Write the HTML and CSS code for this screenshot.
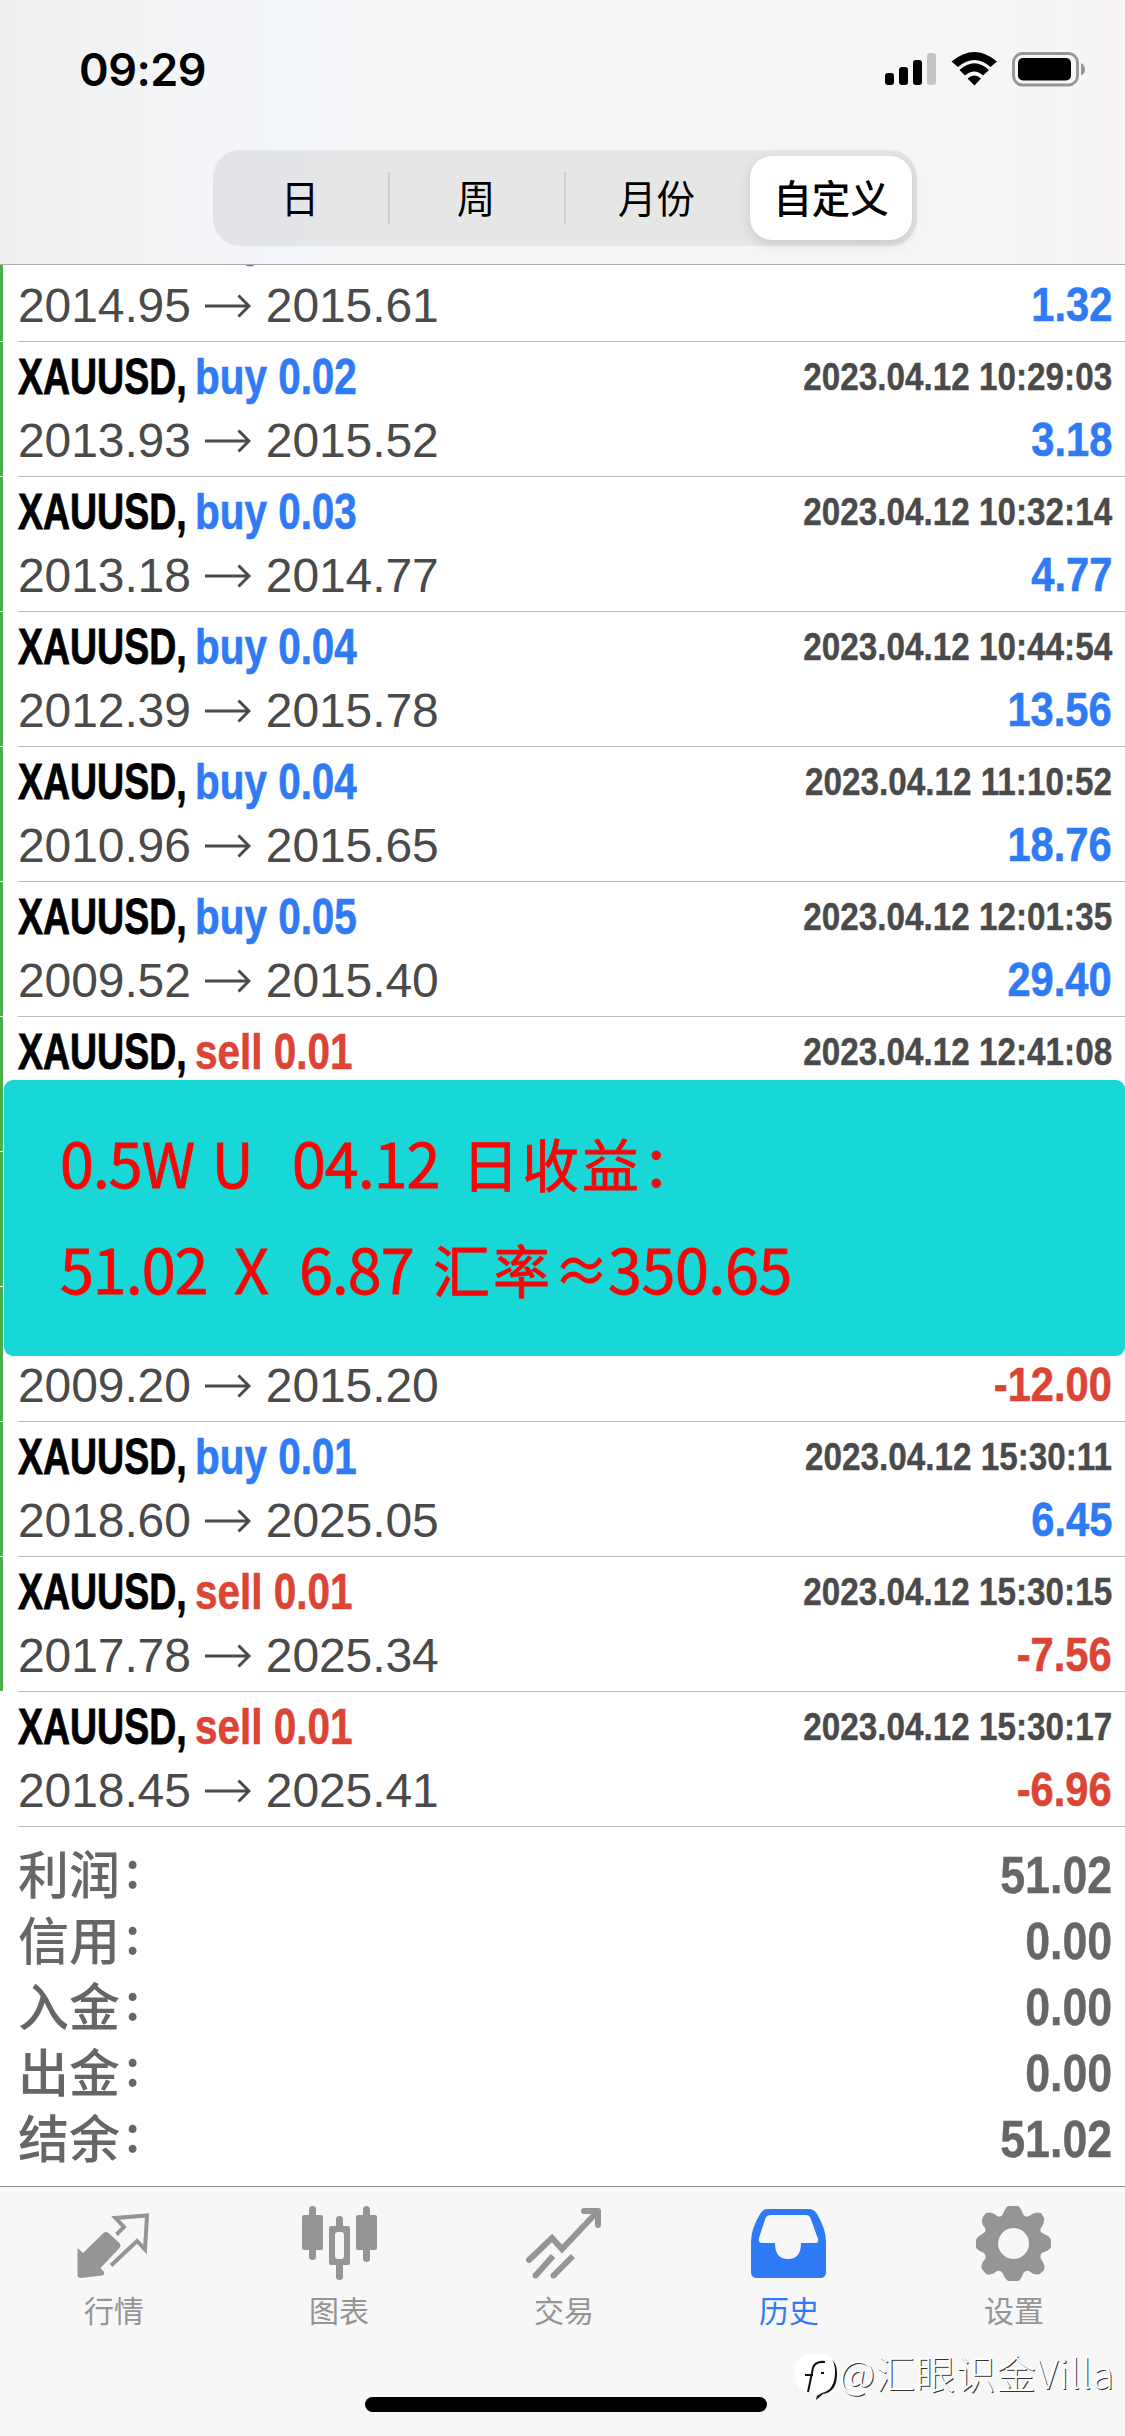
FILE: index.html
```html
<!DOCTYPE html>
<html lang="zh-CN">
<head>
<meta charset="utf-8">
<title>历史</title>
<link rel="stylesheet" href="styles.css">
</head>
<body>
<div class="screen">
  <header class="top">
    <div class="status">
      <span class="clock">09:29</span>
      <svg class="status-icons" width="202" height="40" viewBox="0 0 202 40">
        <rect x="2" y="23" width="9" height="12" rx="3"/>
        <rect x="16" y="17" width="9" height="18" rx="3"/>
        <rect x="30" y="10" width="9" height="25" rx="3"/>
        <rect x="44" y="3" width="9" height="32" rx="3" fill="#c4c4c4"/>
        <path d="M68.500 11.500Q91.500 -7.500 114 11.500L107.500 17Q91.500 3 75 17Z"/>
        <path d="M76.500 20Q91.500 6.500 106 20L100 25.500Q91.500 17.500 82 25.500Z"/>
        <path d="M84.500 28.500Q91.500 22.500 98 28.500L91.500 35.500Z"/>
        <rect x="130.500" y="3.500" width="64" height="31.500" rx="9" fill="none" stroke="#969696" stroke-width="2.800"/>
        <rect x="135" y="8" width="53" height="22.500" rx="5"/>
        <path d="M198 13Q202 15 202 19.500T198 25.500Z" fill="#969696"/>
      </svg>
    </div>
    <nav class="segments">
      <span class="segment">日</span>
      <span class="segment divided">周</span>
      <span class="segment divided">月份</span>
      <span class="segment selected">自定义</span>
    </nav>
  </header>

  <main class="history">
    <section class="deal clipped">
      <div class="line"><span class="title"><b class="symbol">XAUUSD,</b><b class="side buy">buy 0.02</b></span></div>
      <div class="line"><span class="prices">2014.95<svg class="arrow" viewBox="0 0 46 24"><path d="M0 12H43M33.500 1.500L44 12L33.500 22.500"/></svg>2015.61</span><b class="result buy">1.32</b></div>
    </section>
    <section class="deal">
      <div class="line"><span class="title"><b class="symbol">XAUUSD,</b><b class="side buy">buy 0.02</b></span><b class="time">2023.04.12 10:29:03</b></div>
      <div class="line"><span class="prices">2013.93<svg class="arrow" viewBox="0 0 46 24"><path d="M0 12H43M33.500 1.500L44 12L33.500 22.500"/></svg>2015.52</span><b class="result buy">3.18</b></div>
    </section>
    <section class="deal">
      <div class="line"><span class="title"><b class="symbol">XAUUSD,</b><b class="side buy">buy 0.03</b></span><b class="time">2023.04.12 10:32:14</b></div>
      <div class="line"><span class="prices">2013.18<svg class="arrow" viewBox="0 0 46 24"><path d="M0 12H43M33.500 1.500L44 12L33.500 22.500"/></svg>2014.77</span><b class="result buy">4.77</b></div>
    </section>
    <section class="deal">
      <div class="line"><span class="title"><b class="symbol">XAUUSD,</b><b class="side buy">buy 0.04</b></span><b class="time">2023.04.12 10:44:54</b></div>
      <div class="line"><span class="prices">2012.39<svg class="arrow" viewBox="0 0 46 24"><path d="M0 12H43M33.500 1.500L44 12L33.500 22.500"/></svg>2015.78</span><b class="result buy">13.56</b></div>
    </section>
    <section class="deal">
      <div class="line"><span class="title"><b class="symbol">XAUUSD,</b><b class="side buy">buy 0.04</b></span><b class="time">2023.04.12 11:10:52</b></div>
      <div class="line"><span class="prices">2010.96<svg class="arrow" viewBox="0 0 46 24"><path d="M0 12H43M33.500 1.500L44 12L33.500 22.500"/></svg>2015.65</span><b class="result buy">18.76</b></div>
    </section>
    <section class="deal">
      <div class="line"><span class="title"><b class="symbol">XAUUSD,</b><b class="side buy">buy 0.05</b></span><b class="time">2023.04.12 12:01:35</b></div>
      <div class="line"><span class="prices">2009.52<svg class="arrow" viewBox="0 0 46 24"><path d="M0 12H43M33.500 1.500L44 12L33.500 22.500"/></svg>2015.40</span><b class="result buy">29.40</b></div>
    </section>
    <section class="deal">
      <div class="line"><span class="title"><b class="symbol">XAUUSD,</b><b class="side sell">sell 0.01</b></span><b class="time">2023.04.12 12:41:08</b></div>
    </section>
    <section class="deal"></section>
    <section class="deal">
      <div class="line"></div>
      <div class="line"><span class="prices">2009.20<svg class="arrow" viewBox="0 0 46 24"><path d="M0 12H43M33.500 1.500L44 12L33.500 22.500"/></svg>2015.20</span><b class="result sell">-12.00</b></div>
    </section>
    <section class="deal">
      <div class="line"><span class="title"><b class="symbol">XAUUSD,</b><b class="side buy">buy 0.01</b></span><b class="time">2023.04.12 15:30:11</b></div>
      <div class="line"><span class="prices">2018.60<svg class="arrow" viewBox="0 0 46 24"><path d="M0 12H43M33.500 1.500L44 12L33.500 22.500"/></svg>2025.05</span><b class="result buy">6.45</b></div>
    </section>
    <section class="deal">
      <div class="line"><span class="title"><b class="symbol">XAUUSD,</b><b class="side sell">sell 0.01</b></span><b class="time">2023.04.12 15:30:15</b></div>
      <div class="line"><span class="prices">2017.78<svg class="arrow" viewBox="0 0 46 24"><path d="M0 12H43M33.500 1.500L44 12L33.500 22.500"/></svg>2025.34</span><b class="result sell">-7.56</b></div>
    </section>
    <section class="deal unmarked">
      <div class="line"><span class="title"><b class="symbol">XAUUSD,</b><b class="side sell">sell 0.01</b></span><b class="time">2023.04.12 15:30:17</b></div>
      <div class="line"><span class="prices">2018.45<svg class="arrow" viewBox="0 0 46 24"><path d="M0 12H43M33.500 1.500L44 12L33.500 22.500"/></svg>2025.41</span><b class="result sell">-6.96</b></div>
    </section>
    <aside class="note">
      <p class="note-line"><span class="n1">0.5W</span><span class="n2">U</span><span class="n3">04.12</span><span class="han">日收益：</span></p>
      <p class="note-line"><span class="n4">51.02</span><span class="n5">X</span><span class="n6">6.87</span><span class="han han-rate">汇率</span><span class="n7">≈</span><span class="n8">350.65</span></p>
    </aside>
  </main>

  <section class="summary">
    <div class="total"><span class="label">利润<i>:</i></span><b class="sum">51.02</b></div>
    <div class="total"><span class="label">信用<i>:</i></span><b class="sum">0.00</b></div>
    <div class="total"><span class="label">入金<i>:</i></span><b class="sum">0.00</b></div>
    <div class="total"><span class="label">出金<i>:</i></span><b class="sum">0.00</b></div>
    <div class="total"><span class="label">结余<i>:</i></span><b class="sum">51.02</b></div>
  </section>

  <footer class="tabs">
    <div class="tab">
      <svg width="80" height="80" viewBox="0 0 80 80"><path fill="currentColor" d="M3.500 39L9 44L29.500 24Q32 22 34.500 24L45.500 34Q47.500 37 45 39.500L26.500 59L30 63Q31 66 28 66.500L7 69Q3.500 69 3.500 66Z"/><path fill="none" stroke="currentColor" stroke-width="4" d="M42.500 25.500L50 18L41.500 9L73 6.500L71 40.500L63 32L37 56.500"/></svg>
      <span>行情</span>
    </div>
    <div class="tab">
      <svg width="80" height="86" viewBox="0 0 80 86"><g fill="currentColor"><rect x="10" y="0" width="7" height="54" rx="3.500"/><rect x="3" y="9" width="21" height="35" rx="2"/><rect x="64" y="0" width="7" height="56" rx="3.500"/><rect x="57" y="9" width="21" height="35" rx="2"/><rect x="37" y="10" width="7" height="64" rx="3.500"/><rect x="30" y="20" width="21" height="39" rx="2"/></g><rect x="36" y="26" width="9" height="27" rx="3" fill="#f7f7f7"/></svg>
      <span>图表</span>
    </div>
    <div class="tab">
      <svg width="80" height="86" viewBox="0 0 80 86" fill="none" stroke="currentColor" stroke-width="6"><path stroke-linecap="round" d="M5 54L28 32L38 43L73 6"/><path stroke-linecap="round" stroke-linejoin="round" d="M60 5H74V19"/><path d="M29 50L12 69M49 50L30 69"/><g fill="currentColor" stroke="none"><circle cx="11.500" cy="69.500" r="3"/><circle cx="29.500" cy="69.500" r="3"/></g></svg>
      <span>交易</span>
    </div>
    <div class="tab active">
      <svg width="80" height="86" viewBox="0 0 80 86"><path fill="currentColor" fill-rule="evenodd" d="M18 3H60Q65 3 68 8Q77 23 77 36V66Q77 72 71 72H8Q2 72 2 66V36Q2 23 11 8Q14 3 18 3ZM22 9Q18 9 16.500 12L10 32Q9 37 13 37H26Q26 53 39 53T52 37H66Q70 37 69 33L61.500 12Q60 9 57 9Z"/></svg>
      <span>历史</span>
    </div>
    <div class="tab">
      <svg width="80" height="86" viewBox="0 0 80 86"><path fill="currentColor" fill-rule="evenodd" d="M34 0H44Q47 2 49 8Q51 12 55 10Q61 5 67 7L70 12Q71 17 67 22Q65 26 70 28Q76 30 77 34V41Q75 45 70 46Q65 48 67 53Q72 60 70 64L66 68Q61 70 55 65Q51 64 49 68Q47 74 44 75H34Q31 73 29 68Q27 64 23 65Q17 70 12 68L8 63Q6 59 11 53Q13 48 8 46Q3 44 2 41V34Q4 30 8 28Q13 26 11 22Q6 17 9 11L12 7Q18 5 23 10Q27 12 29 8Q31 2 34 0ZM39.500 22A15.500 15.500 0 1 0 39.600 22Z"/></svg>
      <span>设置</span>
    </div>
    <div class="home-bar"></div>
    <div class="watermark">
      <svg width="44" height="46" viewBox="0 0 44 46"><path fill="#111" d="M18 3H28Q42 3 42 20Q42 38 28 40L21 46L23 37Z"/><path fill="#fff" d="M14 0H26Q40 0 40 18Q40 36 27 39L20 43L18 38H12Q0 35 0 19Q0 2 14 0Z"/><path fill="none" stroke="#111" stroke-width="2" d="M13 38L18 14Q20 7 30 8M10 21H18M26 19H29"/></svg>
      <span class="handle">@汇眼识金Villa</span>
    </div>
  </footer>
</div>
</body>
</html>
```
FILE: styles.css
```css
* { box-sizing: border-box; }
body { margin: 0; background: #fff; font-family: "Liberation Sans", "Noto Sans CJK SC", sans-serif; }
.screen { width: 1125px; height: 2436px; overflow: hidden; display: flex; flex-direction: column; background: #fff; }

.top { height: 265px; flex: none; border-bottom: 1px solid #aaa; background: linear-gradient(90deg, #efefef 0, #f3f4f5 150px, #f3f6fc 270px, #f6f6f6 400px, #f6f6f6 1000px, #f8f5f4 100%); }
.status { height: 150px; padding: 19px 40px 0 79px; display: flex; justify-content: space-between; align-items: flex-start; }
.clock { font: 600 45px/101px Inter, sans-serif; letter-spacing: -.5px; }
.status-icons { margin-top: 31px; }
.segments { width: 704px; height: 96px; margin-left: 213px; padding: 6px 5px 6px 0; display: grid; grid-template-columns: 176px 176px 185px 162px; border-radius: 27px; background: linear-gradient(90deg, #e2e4e7, #e7e7e8 40%, #e5e5e5); }
.segment { position: relative; padding-right: 2px; font: 400 38.500px/80px "Noto Sans CJK SC", sans-serif; text-align: center; }
.divided::before { content: ""; position: absolute; left: -1px; top: 16px; width: 2px; height: 52px; background: #cfcfd1; }
.selected { padding-right: 0; background: #fff; border-radius: 22px; font-weight: 500; box-shadow: 0 4px 12px rgba(0,0,0,.13); }

.history { position: relative; flex: none; }
.deal { position: relative; height: 135px; padding: 2px 13px 0 18px; }
.deal::before { content: ""; position: absolute; left: 0; top: 0; width: 3px; bottom: 1px; background: #4cad4c; }
.deal::after { content: ""; position: absolute; left: 18px; right: 0; bottom: 0; height: 1px; background: #bcbcbf; }
.unmarked::before { display: none; }
.clipped { height: 77px; overflow: hidden; display: flex; flex-direction: column; justify-content: flex-end; padding-bottom: 7px; }
.clipped .title { line-height: 60px; }
.line { height: 63px; flex: none; display: flex; justify-content: space-between; line-height: 68px; white-space: nowrap; }
.title { display: flex; font-size: 49.500px; line-height: 66px; }
.symbol { width: 177px; color: #000; transform: scaleX(.757); transform-origin: 0 0; -webkit-text-stroke: .8px currentColor; }
.side { transform: scaleX(.817); transform-origin: 0 0; -webkit-text-stroke: .6px currentColor; }
.buy { color: #2f7af5; }
.sell { color: #dc4436; }
.time { font-size: 39px; line-height: 65px; color: #4a4a4a; transform: scaleX(.853); transform-origin: 100% 0; -webkit-text-stroke: .4px currentColor; }
.prices { font-size: 48px; line-height: 67px; color: #4a4a4a; display: flex; align-items: center; height: 67px; letter-spacing: -.1px; }
.arrow { width: 46px; height: 24px; margin: 0 15px 0 14px; fill: none; stroke: #4a4a4a; stroke-width: 3; }
.result { font-size: 49px; line-height: 65px; transform: scaleX(.85); transform-origin: 100% 0; -webkit-text-stroke: .6px currentColor; }

.note { position: absolute; left: 4px; top: 815px; width: 1121px; height: 276px; padding: 29px 0 0 56px; border-radius: 9px; background: #17d7d7; color: #fa0505; font: 400 61px/106px "Noto Sans CJK SC", sans-serif; -webkit-text-stroke: .8px currentColor; }
.note-line { margin: 0; height: 106px; display: flex; white-space: nowrap; letter-spacing: -1px; }
.n1 { width: 152px; letter-spacing: -1px; }
.n2 { width: 80px; transform: scaleX(.94); transform-origin: 0 0; }
.n3 { width: 170px; }
.n4 { width: 174px; }
.n5 { width: 65px; }
.n6 { width: 134px; }
.n7 { width: 54px; transform: scaleX(.9); transform-origin: 0 0; }
.n8 { letter-spacing: -.4px; }
.han { font-size: 57px; letter-spacing: 3px; }
.han-rate { width: 121px; }

.summary { height: 359px; flex: none; padding: 15px 13px 0 18px; }
.total { height: 66px; display: flex; justify-content: space-between; line-height: 66px; color: #666; }
.label { font: 500 51px/60px "Noto Sans CJK SC", sans-serif; }
.label i { position: relative; top: -6px; margin-left: 5px; font-style: normal; }
.sum { font-size: 52px; transform: scaleX(.86); transform-origin: 100% 0; -webkit-text-stroke: .4px currentColor; }

.tabs { position: relative; height: 250px; flex: none; display: grid; grid-template-columns: repeat(5, 225px); border-top: 1px solid #8f8f8f; background: #f7f7f7; }
.tab { height: 150px; padding: 19px 0 0 3px; display: flex; flex-direction: column; align-items: center; color: #959595; font: 30px/35px "Noto Sans CJK SC", sans-serif; }
.tab svg { height: 86px; flex: none; }
.tab svg[height="80"] { height: 80px; margin: 3px 0; }
.active { color: #2f7bf6; }
.home-bar { position: absolute; left: 365px; top: 210px; width: 402px; height: 15px; border-radius: 8px; background: #000; }
.watermark { position: absolute; left: 795px; top: 167px; display: flex; align-items: flex-start; white-space: nowrap; color: #fff; }
.handle { font: 300 39.500px/36px "Noto Sans CJK SC", sans-serif; letter-spacing: .7px; text-shadow: 1px 1px 0 #333; }
```
